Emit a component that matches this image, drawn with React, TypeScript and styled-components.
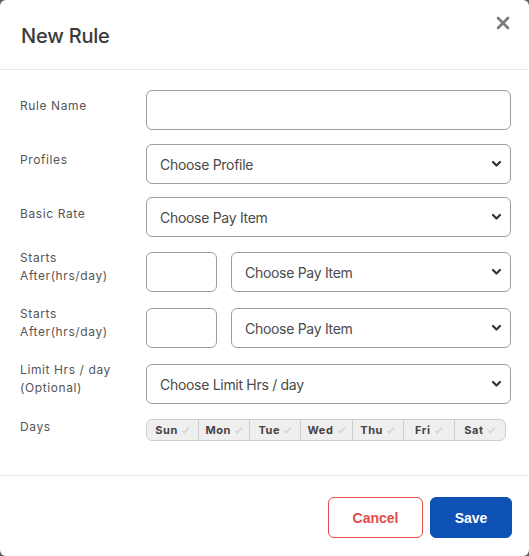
import styled, { createGlobalStyle } from "styled-components";

const Global = createGlobalStyle`
    html, body{
        margin: 0;
        padding: 0;
        background: #5f5f5f;
    }
    *{
        box-sizing: border-box;
    }
`;

const Modal = styled.div`
    width: 529px;
    height: 556px;
    background: #fff;
    border-radius: 6px;
    display: flex;
    flex-direction: column;
    font-family: Inter, "Noto Sans", sans-serif;
    color: #444;
    overflow: hidden;
`;

const Header = styled.div`
    height: 70px;
    padding: 0 18px 0 21px;
    display: flex;
    align-items: center;
    justify-content: space-between;
    border-bottom: 1px solid #e8e8e8;
    h2{
        margin: 0;
        font-size: 20px;
        font-weight: 500;
        color: #3a3a3a;
        letter-spacing: -0.2px;
        padding-top: 2px;
    }
`;

const CloseBtn = styled.button`
    border: none;
    background: none;
    padding: 0;
    width: 14px;
    height: 14px;
    align-self: flex-start;
    margin-top: 16px;
    margin-right: 1px;
    cursor: pointer;
    display: flex;
`;

const Body = styled.div`
    padding: 20px 18px 34px 20px;
    display: flex;
    flex-direction: column;
    border-bottom: 1px solid #e8e8e8;
`;

const Row = styled.div<{ $mt?: number }>`
    display: grid;
    grid-template-columns: 126px 1fr;
    align-items: start;
    margin-top: ${p => p.$mt ?? 0}px;
`;

const Label = styled.label<{ $top?: number }>`
    font-size: 12px;
    line-height: 18px;
    letter-spacing: 0.6px;
    color: #555;
    padding-top: ${p => Math.max(p.$top ?? 7, 0)}px;
    margin-top: ${p => Math.min(p.$top ?? 0, 0)}px;
`;

const Field = styled.div`
    display: flex;
    gap: 14px;
`;

const TextInput = styled.input<{ $w?: number }>`
    height: 40px;
    width: ${p => (p.$w ? `${p.$w}px` : "100%")};
    flex-shrink: 0;
    border: 1px solid #9e9e9e;
    border-radius: 6px;
    outline: none;
    padding: 0 13px;
    font-family: inherit;
    font-size: 14px;
`;

const SelectBox = styled.div`
    position: relative;
    flex: 1;
    svg{
        position: absolute;
        right: 9px;
        top: 16px;
        pointer-events: none;
    }
`;

const Select = styled.select`
    appearance: none;
    width: 100%;
    height: 40px;
    border: 1px solid #9e9e9e;
    border-radius: 6px;
    background: #fff;
    padding: 0 30px 0 13px;
    font-family: inherit;
    font-size: 14px;
    letter-spacing: -0.3px;
    color: #4a4a4a;
    outline: none;
`;

const DayGroup = styled.div`
    width: 360px;
    height: 22px;
    display: grid;
    grid-template-columns: repeat(7, 1fr);
    border: 1px solid #cfcfcf;
    border-radius: 6px;
    background: #efefef;
    overflow: hidden;
`;

const Day = styled.button`
    border: none;
    border-left: 1px solid #cfcfcf;
    background: transparent;
    padding: 0;
    display: flex;
    align-items: center;
    justify-content: center;
    gap: 3px;
    font-family: inherit;
    font-size: 11px;
    font-weight: 700;
    letter-spacing: 0.6px;
    color: #444;
    &:first-child{
        border-left: none;
    }
`;

const Footer = styled.div`
    flex: 1;
    display: flex;
    justify-content: flex-end;
    align-items: flex-start;
    gap: 7px;
    padding: 21px 17px 0 0;
`;

const Button = styled.button<{ $primary?: boolean; $w: number }>`
    width: ${p => p.$w}px;
    height: 41px;
    border-radius: 6px;
    font-family: "Liberation Sans", Arial, sans-serif;
    font-size: 14px;
    font-weight: 700;
    cursor: pointer;
    border: 1px solid ${p => (p.$primary ? "#0d52b4" : "#e64a4a")};
    background: ${p => (p.$primary ? "#0d52b4" : "#fff")};
    color: ${p => (p.$primary ? "#fff" : "#e64a4a")};
`;

const Chevron = () => (
    <svg width="11" height="8" viewBox="0 0 11 8">
        <path d="M2 2l3.5 3.5L9 2" fill="none" stroke="#333" strokeWidth="2.2" strokeLinecap="round" strokeLinejoin="round" />
    </svg>
);

const Check = () => (
    <svg width="9" height="8" viewBox="0 0 9 8">
        <path d="M1 4.3l2.3 2.3L8 1.5" fill="none" stroke="#cfcfcf" strokeWidth="1.2" />
    </svg>
);

function Dropdown({ placeholder }: { placeholder: string }) {
    return (
        <SelectBox>
            <Select defaultValue="">
                <option value="" disabled>{placeholder}</option>
            </Select>
            <Chevron />
        </SelectBox>
    );
}

const days = ["Sun", "Mon", "Tue", "Wed", "Thu", "Fri", "Sat"];

export default function App() {
    return (
        <>
            <Global />
            <Modal>
                <Header>
                    <h2>New Rule</h2>
                    <CloseBtn aria-label="close">
                        <svg width="14" height="14" viewBox="0 0 14 14">
                            <path d="M2 2l10 10M12 2L2 12" stroke="#7a7a7a" strokeWidth="2.6" strokeLinecap="round" />
                        </svg>
                    </CloseBtn>
                </Header>
                <Body>
                    <Row>
                        <Label>Rule Name</Label>
                        <Field>
                            <TextInput type="text" />
                        </Field>
                    </Row>
                    <Row $mt={14}>
                        <Label>Profiles</Label>
                        <Dropdown placeholder="Choose Profile" />
                    </Row>
                    <Row $mt={13}>
                        <Label $top={8}>Basic Rate</Label>
                        <Dropdown placeholder="Choose Pay Item" />
                    </Row>
                    {[15, 16].map(mt => (
                        <Row key={mt} $mt={mt}>
                            <Label $top={-3}>Starts<br />After(hrs/day)</Label>
                            <Field>
                                <TextInput type="text" $w={71} />
                                <Dropdown placeholder="Choose Pay Item" />
                            </Field>
                        </Row>
                    ))}
                    <Row $mt={16}>
                        <Label $top={-3}>Limit Hrs / day<br />(Optional)</Label>
                        <Dropdown placeholder="Choose Limit Hrs / day" />
                    </Row>
                    <Row $mt={15}>
                        <Label $top={-1}>Days</Label>
                        <DayGroup>
                            {days.map(d => (
                                <Day key={d}>{d}<Check /></Day>
                            ))}
                        </DayGroup>
                    </Row>
                </Body>
                <Footer>
                    <Button $w={95}>Cancel</Button>
                    <Button $w={82} $primary>Save</Button>
                </Footer>
            </Modal>
        </>
    );
}
